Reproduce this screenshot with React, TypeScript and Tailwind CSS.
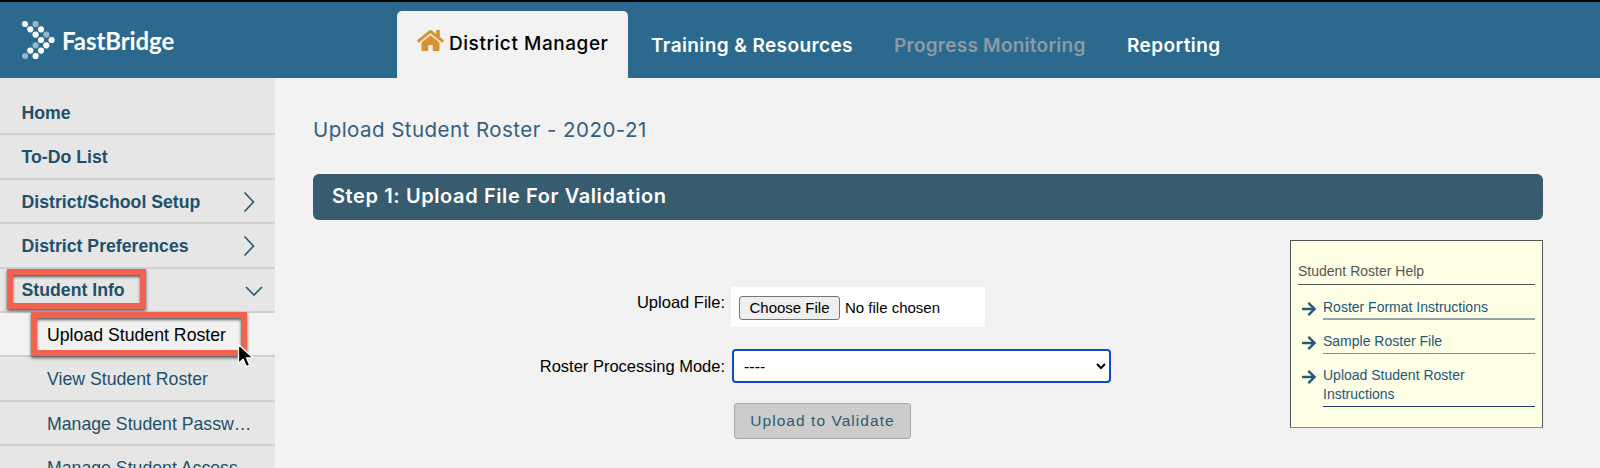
import { FaArrowRight, FaHome } from "react-icons/fa";

const LOGO_DOTS = [
  { x: 3, y: 3, o: 1 },
  { x: 13.6, y: 3, o: 0.5 },
  { x: 8.3, y: 8.3, o: 1 },
  { x: 19, y: 8.3, o: 1 },
  { x: 13.6, y: 13.6, o: 1 },
  { x: 24.3, y: 13.6, o: 0.5 },
  { x: 19, y: 19, o: 1 },
  { x: 29.6, y: 19, o: 1 },
  { x: 13.6, y: 24.3, o: 0.5 },
  { x: 24.3, y: 24.3, o: 1 },
  { x: 8.3, y: 29.6, o: 1 },
  { x: 19, y: 29.6, o: 1 },
  { x: 3, y: 35, o: 0.5 },
  { x: 13.6, y: 35, o: 1 },
];

const TABS = [
  { label: "Training & Resources", className: "text-white w-[202px] ml-[23px] tracking-[0.4px]" },
  { label: "Progress Monitoring", className: "text-[#8d9ba5] w-[190px] ml-[41px] tracking-[0.25px]" },
  { label: "Reporting", className: "text-white w-[93px] ml-[43px] tracking-[0.4px]" },
];

const TOP_MENU = [
  { label: "Home" },
  { label: "To-Do List" },
  { label: "District/School Setup", icon: "right" },
  { label: "District Preferences", icon: "right" },
  { label: "Student Info", icon: "down" },
];

const SUB_MENU = [
  { label: "Upload Student Roster", active: true },
  { label: "View Student Roster" },
  { label: "Manage Student Passwords" },
  { label: "Manage Student Access" },
];

const HELP_LINKS = [
  { label: "Roster Format Instructions", line: "border-[#95a3a5] border-b-[2px] pb-[1px]" },
  { label: "Sample Roster File", line: "border-[#7d8f95] border-b pb-[2px]" },
  { label: "Upload Student Roster Instructions", line: "border-[#123e70] border-b pb-[2px]" },
];

function Logo() {
  return (
    <div className="flex items-center">
      <svg width="38" height="40" viewBox="0 0 38 40" className="mt-[2px]">
        {LOGO_DOTS.map((d) => (
          <circle key={`${d.x}-${d.y}`} cx={d.x} cy={d.y} r="3.1" fill="#fff" fillOpacity={d.o} />
        ))}
      </svg>
      <span className="mt-[1px] ml-[2px] font-['Lato',sans-serif] text-[24px] font-bold tracking-[-0.1px] text-white">FastBridge</span>
    </div>
  );
}

function Header() {
  return (
    <header className="flex h-[78px] border-t-[2px] border-black bg-[#2b6a8e]">
      <div className="flex w-[397px] shrink-0 items-center pl-[22px]">
        <Logo />
      </div>
      <div className="mt-[9px] flex h-[67px] w-[231px] items-center rounded-t-[5px] bg-[#f2f2f2] pl-[20px]">
        <FaHome className="mb-[8px] size-[27px] text-[#d9922e]" />
        <span className="ml-[5px] font-['Inter',sans-serif] text-[19px] font-medium tracking-[0.55px] text-black">District Manager</span>
      </div>
      {TABS.map((t) => (
        <div key={t.label} className={`flex items-center pt-[13px] font-['Inter',sans-serif] text-[19px] font-semibold whitespace-nowrap ${t.className}`}>
          {t.label}
        </div>
      ))}
    </header>
  );
}

function Sidebar() {
  return (
    <aside className="relative w-[275px] shrink-0 bg-[#e6e6e6] pt-[13px] font-['Liberation_Sans',sans-serif]">
      {TOP_MENU.map((item) => (
        <div key={item.label} className="flex h-[44.4px] items-center justify-between border-b-[2px] border-[#d0d0d0] pt-[2px] pl-[21.500px] text-[17.7px] font-bold text-[#22506a]">
          <span>{item.label}</span>
          {item.icon === "right" && (
            <svg width="12" height="22" viewBox="0 0 12 22" fill="none" stroke="#2c5a75" strokeWidth="1.7" className="mr-[20px]">
              <path d="M1.5 1.5 10.5 11l-9 9.500" />
            </svg>
          )}
          {item.icon === "down" && (
            <svg width="18" height="10" viewBox="0 0 18 10" fill="none" stroke="#2c5a75" strokeWidth="1.7" className="mr-[12px]">
              <path d="M1 1l8 8 8-8" />
            </svg>
          )}
        </div>
      ))}
      {SUB_MENU.map((item) => (
        <div
          key={item.label}
          className={`flex h-[44.4px] items-center border-b-[2px] border-[#d0d0d0] pt-[2px] pr-[22px] pl-[47px] text-[17.7px] ${item.active ? "bg-[#f2f2f2] text-black" : "text-[#22506a]"}`}
        >
          <span className="truncate">{item.label}</span>
        </div>
      ))}

      {/* red annotation boxes */}
      <div className="absolute top-[191px] left-[7px] h-[40px] w-[139px] border-[6px] border-[#ef6350] shadow-[0_2px_3px_rgba(0,0,0,0.6),inset_0_2px_3px_rgba(0,0,0,0.6)]" />
      <div className="absolute top-[234px] left-[31px] h-[44px] w-[216px] border-[6px] border-[#ef6350] shadow-[0_2px_3px_rgba(0,0,0,0.6),inset_0_2px_3px_rgba(0,0,0,0.6)]" />
      <svg width="18" height="26" viewBox="0 0 18 26" className="absolute top-[265px] left-[237px]">
        <path d="M1.5 1.500v19l4.600-4.400 3.200 7.600 3.400-1.500-3.200-7.400h6.400z" fill="#000" stroke="#fff" strokeWidth="1.3" strokeLinejoin="round" />
      </svg>
    </aside>
  );
}

function HelpBox() {
  return (
    <div className="mt-[20px] h-[188px] w-[253px] shrink-0 border border-[#555] border-b-[#888] bg-[#ffffe6] px-[7px] pt-[20px] font-['Liberation_Sans',sans-serif]">
      <h3 className="border-b border-[#555] pb-[3px] text-[14px] leading-[20px] text-[#555]">Student Roster Help</h3>
      <ul className="mt-[13px] flex flex-col gap-[12px]">
        {HELP_LINKS.map((l) => (
          <li key={l.label} className="flex">
            <FaArrowRight className="mt-[3px] ml-[3px] size-[16px] shrink-0 text-[#22587a]" />
            <span className={`ml-[6px] block flex-1 text-[14px] leading-[19px] text-[#22587a] ${l.line}`}>{l.label}</span>
          </li>
        ))}
      </ul>
    </div>
  );
}

function UploadForm() {
  return (
    <div className="flex w-[982px] flex-col pt-[67px] font-['Liberation_Sans',sans-serif] text-[16.5px] text-black">
      <div className="flex">
        <label className="w-[412px] pt-[5px] text-right leading-[20px]">Upload File:</label>
        <div className="ml-[6px] flex h-[40px] w-[254px] items-center bg-white pl-[8px]">
          <input
            type="file"
            className="mt-[1px] text-[15px] file:mr-[5px] file:h-[24px] file:w-[101px] file:rounded-[3px] file:border file:border-[#767676] file:bg-[#efefef] file:px-0 file:text-[15px] file:text-black"
          />
        </div>
      </div>
      <div className="mt-[22px] flex items-center">
        <label className="w-[412px] text-right">Roster Processing Mode:</label>
        <select className="ml-[7px] h-[34px] w-[379px] rounded-[4px] border-[2px] border-[#0b50c0] bg-white pl-[6px] text-[16px] text-black outline-none">
          <option>----</option>
        </select>
      </div>
      <div className="mt-[20px] pl-[421px]">
        <button className="h-[36px] w-[177px] rounded-[3px] border border-[#a9a9a9] bg-[#cccccc] text-[15.5px] tracking-[1.05px] text-[#2f5b70]">Upload to Validate</button>
      </div>
    </div>
  );
}

export default function App() {
  return (
    <div className="h-[468px] w-[1600px] overflow-hidden bg-[#f2f2f2]">
      <Header />
      <div className="flex h-[390px]">
        <Sidebar />
        <main className="ml-[38px] w-[1230px] pt-[37px]">
          <h1 className="font-['Inter',sans-serif] text-[20.5px] leading-[30px] tracking-[0.45px] text-[#33607e]">Upload Student Roster - 2020-21</h1>
          <div className="mt-[29px] flex h-[46px] items-center rounded-[6px] bg-[#375c70] pb-[3px] pl-[19px] font-['Inter',sans-serif] text-[20px] font-semibold tracking-[0.6px] text-white">
            Step 1: Upload File For Validation
          </div>
          <div className="flex justify-between">
            <UploadForm />
            <HelpBox />
          </div>
        </main>
      </div>
    </div>
  );
}
